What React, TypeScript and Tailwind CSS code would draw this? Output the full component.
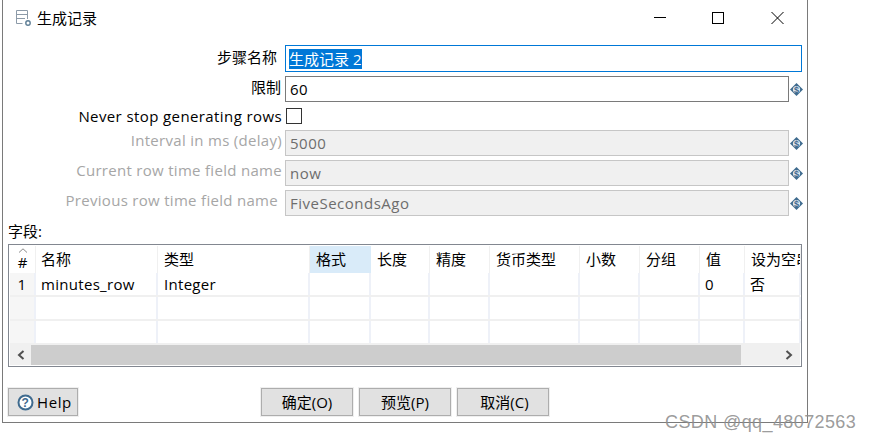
const font = { fontFamily: '"Open Sans", "Noto Sans CJK SC", sans-serif' };

const columns = [
  { label: '#', width: 'w-[26px]' },
  { label: '名称', width: 'w-[122px]' },
  { label: '类型', width: 'w-[152px]' },
  { label: '格式', width: 'w-[61px]' },
  { label: '长度', width: 'w-[59px]' },
  { label: '精度', width: 'w-[60px]' },
  { label: '货币类型', width: 'w-[90px]' },
  { label: '小数', width: 'w-[60px]' },
  { label: '分组', width: 'w-[60px]' },
  { label: '值', width: 'w-[45px]' },
  { label: '设为空串?', width: 'w-[56px]' },
];

const rows = [
  ['1', 'minutes_row', 'Integer', '', '', '', '', '', '', '0', '否'],
  ['', '', '', '', '', '', '', '', '', '', ''],
  ['', '', '', '', '', '', '', '', '', '', ''],
];

function VarIcon() {
  return (
    <svg width="13" height="13" viewBox="0 0 13 13" className="ml-[1px] shrink-0">
      <path d="M6.5 0 L13 6.5 L6.5 13 L0 6.5 Z" fill="#3f6b8f" />
      <circle cx="6.5" cy="6.5" r="3.6" fill="#dfe8ee" />
      <text x="6.5" y="9.6" textAnchor="middle" fontSize="9" fontWeight="700" fill="#3f6b8f" fontFamily="Liberation Sans">
        $
      </text>
    </svg>
  );
}

function Row({
  label,
  value,
  disabled,
  labelPad,
  mt,
}: {
  label: string;
  value: string;
  disabled?: boolean;
  labelPad: string;
  mt: string;
}) {
  return (
    <div className={`flex items-center ${mt}`}>
      <div
        className={`w-[282px] text-right whitespace-nowrap leading-[20px] ${labelPad} ${
          disabled ? 'mb-[6px] text-[#a6a6a6] tracking-[0.3px]' : 'mb-[4px] text-black'
        }`}
      >
        {label}
      </div>
      <div
        className={`w-[504px] h-[26px] pl-[4px] leading-[24px] border tracking-[0.5px] ${
          disabled
            ? 'bg-[#f0f0f0] border-[#c6c6c6] text-[#6d6d6d]'
            : 'bg-white border-[#7a7a7a] text-black'
        }`}
      >
        {value}
      </div>
      <VarIcon />
    </div>
  );
}

function DialogButton({ label, width, mr, pad }: { label: string; width: string; mr?: string; pad?: string }) {
  return (
    <button
      className={`${width} ${mr ?? ''} ${pad ?? ''} h-[28px] bg-[#e1e1e1] border border-[#adadad] outline outline-[#efefef] text-[15px] leading-[24px] text-black`}
    >
      {label}
    </button>
  );
}

export default function App() {
  return (
    <div className="w-[871px] h-[443px] bg-white relative overflow-hidden text-[15px]" style={font}>
      <div className="ml-[2px] w-[806px] h-[423px] border-l border-r border-b border-[#7a7a7a] flex flex-col">
        {/* title bar */}
        <div className="h-[45px] flex items-start shrink-0">
          <svg width="18" height="17" viewBox="0 0 18 17" className="ml-[12px] mt-[10px]" fill="none">
            <path d="M1.5 0.5 H12.5 V9 M7.5 13.5 H1.5 V0.5" stroke="#8c9aa8" />
            <path d="M1.5 4.5 H12.5 M1.5 8.5 H10" stroke="#8c9aa8" />
            <circle cx="13" cy="13" r="2.2" stroke="#5f7f96" strokeWidth="1.4" />
          </svg>
          <div className="ml-[4px] mt-[8px] leading-[20px] text-black">生成记录</div>
          <svg width="130" height="14" viewBox="0 0 130 14" className="ml-auto mr-[23px] mt-[11px]" fill="none" stroke="#000">
            <path d="M0 6.5 H12" />
            <rect x="58.5" y="1.5" width="11" height="11" />
            <path d="M117.5 1 L129.5 13 M129.5 1 L117.5 13" />
          </svg>
        </div>

        {/* form */}
        <div className="flex items-center">
          <div className="w-[282px] pr-[8px] text-right leading-[20px] mb-[4px] text-black">步骤名称</div>
          <div className="w-[517px] h-[27px] border border-[#0078d7] pl-[3px] flex items-center">
            <span className="bg-[#0078d7] text-white h-[20px] leading-[20px] w-[73px] whitespace-nowrap">生成记录 2</span>
          </div>
        </div>
        <Row label="限制" value="60" labelPad="pr-[4px]" mt="mt-[4px]" />
        <div className="flex items-center mt-[4px]">
          <div className="w-[282px] pr-[3px] text-right whitespace-nowrap leading-[20px] text-black tracking-[0.4px]">
            Never stop generating rows
          </div>
          <div className="w-[16px] h-[16px] border border-[#333] ml-[1px]" />
        </div>
        <Row label="Interval in ms (delay)" value="5000" disabled labelPad="pr-[3px]" mt="mt-[4px]" />
        <Row label="Current row time field name" value="now" disabled labelPad="pr-[3px]" mt="mt-[4px]" />
        <Row label="Previous row time field name" value="FiveSecondsAgo" disabled labelPad="pr-[7px]" mt="mt-[4px]" />

        <div className="ml-[5px] mt-[5px] h-[23px] leading-[20px] text-black">字段:</div>

        {/* fields table */}
        <div className="ml-[5px] w-[794px] h-[123px] border border-[#828790] px-[1px] pt-[1px] flex flex-col overflow-hidden shrink-0">
          <div className="flex h-[27px] shrink-0">
            {columns.map((col, i) => (
              <div
                key={col.label}
                className={`${col.width} shrink-0 relative overflow-hidden whitespace-nowrap leading-[27px] ${
                  i === 0 ? 'text-center' : i === 1 ? 'pl-[5px]' : 'pl-[6px]'
                } ${i === 3 ? 'bg-[#d9ebf9]' : 'border-r border-[#f0f0f0]'}`}
              >
                {i === 0 && (
                  <svg width="10" height="5" viewBox="0 0 10 5" className="absolute left-[8px] top-[2px]" fill="none" stroke="#8a8a8a">
                    <path d="M1 4.5 L5 0.8 L9 4.5" />
                  </svg>
                )}
                <span className={i === 0 ? 'relative top-[3px]' : ''}>{col.label}</span>
              </div>
            ))}
          </div>
          {rows.map((row, r) => (
            <div key={r} className="flex h-[24px] shrink-0 border-b-2 border-[#f0f0f0]">
              {row.map((cell, c) => (
                <div
                  key={c}
                  className={`${columns[c].width} shrink-0 overflow-hidden whitespace-nowrap leading-[22px] border-r-2 border-[#eef1f8] text-black tracking-[0.3px] ${
                    c === 0 ? 'bg-[#f6f6f6] text-center' : c === 2 ? 'pl-[6px]' : 'pl-[5px]'
                  }`}
                >
                  {cell}
                </div>
              ))}
            </div>
          ))}
          <div className="flex h-[20px] bg-[#f0f0f0] items-center shrink-0">
            <div className="w-[21px] flex justify-center">
              <svg width="8" height="10" viewBox="0 0 8 10" fill="none" stroke="#505050" strokeWidth="2">
                <path d="M6.5 1 L2 5 L6.5 9" />
              </svg>
            </div>
            <div className="w-[710px] h-full bg-[#cdcdcd]" />
            <div className="flex-1 flex justify-end pr-[7px]">
              <svg width="8" height="10" viewBox="0 0 8 10" fill="none" stroke="#505050" strokeWidth="2">
                <path d="M1.5 1 L6 5 L1.5 9" />
              </svg>
            </div>
          </div>
        </div>

        {/* buttons */}
        <div className="relative mt-[21px] ml-[5px] flex h-[28px]">
          <button className="w-[70px] h-[28px] bg-[#e1e1e1] border border-[#adadad] outline outline-[#efefef] flex items-center pl-[8px] gap-[3px] text-black tracking-[0.6px]">
            <svg width="17" height="17" viewBox="0 0 17 17" fill="none">
              <circle cx="8.5" cy="8.5" r="7" stroke="#3f6b8f" strokeWidth="2" fill="#fff" />
              <text x="8.5" y="13" textAnchor="middle" fontSize="12" fontWeight="700" fill="#3f6b8f" fontFamily="Liberation Sans">
                ?
              </text>
            </svg>
            <span className="leading-[24px]">Help</span>
          </button>
          <div className="ml-[183px] flex">
            <DialogButton label="确定(O)" width="w-[92px]" mr="mr-[6px]" />
            <DialogButton label="预览(P)" width="w-[92px]" mr="mr-[6px]" />
            <DialogButton label="取消(C)" width="w-[92px]" pad="pl-[3px]" />
          </div>
        </div>
      </div>

      {/* watermark */}
      <div className="absolute left-[665px] top-[410px] text-[18px] leading-[24px] text-[#8f8f8f]/90 whitespace-nowrap tracking-[0.4px]" style={{ fontFamily: '"Liberation Sans", sans-serif' }}>
        CSDN @qq_48072563
      </div>
    </div>
  );
}
